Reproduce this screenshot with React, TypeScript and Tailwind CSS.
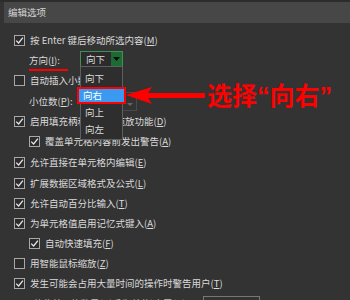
import type { ReactNode } from 'react'

const FONT = { fontFamily: '"Noto Sans CJK SC", "Liberation Sans", sans-serif' }

function Box({ checked }: { checked: boolean }) {
  return (
    <span className="flex h-[11px] w-[11px] shrink-0 items-center justify-center border border-[#a8a8a8] bg-[#2c2c2c]">
      {checked && (
        <svg width="9" height="9" viewBox="0 0 9 9">
          <path d="M1.2 4.6 L3.6 7 L7.9 1.6" fill="none" stroke="#e6e6e6" strokeWidth="1.3" />
        </svg>
      )}
    </span>
  )
}

function Row({
  checked,
  indent = false,
  h = 'h-[20px]',
  children,
}: {
  checked?: boolean
  indent?: boolean
  h?: string
  children: ReactNode
}) {
  return (
    <div className={`flex items-center gap-[5px] ${h} ${indent ? 'pl-[29px]' : 'pl-[14px]'}`}>
      {checked !== undefined && <Box checked={checked} />}
      <span className="whitespace-nowrap">{children}</span>
    </div>
  )
}

const U = ({ c }: { c: string }) => <span className="underline underline-offset-[1px]">{c}</span>

export default function App() {
  const items = ['向下', '向右', '向上', '向左']

  return (
    <div className="relative h-[300px] w-[350px] overflow-hidden bg-[#333333] text-[9.5px] text-[#dadada]" style={FONT}>
      <div className="h-[2px] bg-[#2c2c2c]" />
      {/* header */}
      <div className="ml-[4px] flex h-[21px] items-center bg-[#474747] pl-[4px] text-[#d4d4d4]">编辑选项</div>

      <div className="mt-[7px]">
        <Row checked>
          按 Enter 键后移动所选内容(<U c="M" />)
        </Row>
        <div className="flex h-[21px] items-center pl-[29px]">
          <span className="w-[51px]">
            方向(<U c="I" />):
          </span>
          <div className="flex h-[16px] w-[43px] -translate-y-[2px] border border-[#3f9152] bg-[#2b2b2b]">
            <span className="flex-1 pl-[5px] leading-[14px]">向下</span>
            <span className="flex w-[11px] items-center justify-center bg-[#1c6b33]">
              <svg width="7" height="4" viewBox="0 0 7 4">
                <path d="M0 0 H7 L3.5 4 Z" fill="#0b0b0b" />
              </svg>
            </span>
          </div>
        </div>
        <Row checked={false} h="h-[19px]">
          自动插入小数点(<U c="U" />)
        </Row>
        <div className="flex h-[22px] items-center pl-[29px]">
          <span className="w-[51px]">
            小位数(<U c="P" />):
          </span>
          <div className="flex h-[19px] w-[57px] border border-[#4a4a4a]">
            <span className="flex-1" />
            <span className="flex w-[13px] items-end justify-center pb-[4px]">
              <svg width="6" height="3" viewBox="0 0 6 3">
                <path d="M0 0 H6 L3 3 Z" fill="#666" />
              </svg>
            </span>
          </div>
        </div>
        <Row checked h="h-[19px]">
          启用填充柄和单元格拖放功能(<U c="D" />)
        </Row>
        <Row checked indent h="h-[21px]">
          覆盖单元格内容前发出警告(<U c="A" />)
        </Row>
        <Row checked h="h-[21px]">
          允许直接在单元格内编辑(<U c="E" />)
        </Row>
        <Row checked>
          扩展数据区域格式及公式(<U c="L" />)
        </Row>
        <Row checked>
          允许自动百分比输入(<U c="T" />)
        </Row>
        <Row checked>
          为单元格值启用记忆式键入(<U c="A" />)
        </Row>
        <Row checked indent>
          自动快速填充(<U c="F" />)
        </Row>
        <Row checked={false}>
          用智能鼠标缩放(<U c="Z" />)
        </Row>
        <Row checked>
          发生可能会占用大量时间的操作时警告用户(<U c="T" />)
        </Row>
        <div className="flex h-[20px] items-start pl-[33px] pt-[3px]">
          <span className="w-[170px] whitespace-nowrap text-[#bdbdbd]">若此单元格数目(以千为单位)大于(U):</span>
          <span className="h-[16px] w-[57px] border border-[#777]" />
        </div>
      </div>

      {/* red underline under 方向 */}
      <div className="absolute left-[29px] top-[69px] h-[2px] w-[39px] bg-[#ff0000]" />

      {/* open dropdown list */}
      <div className="absolute left-[80px] top-[66px] w-[43px] border border-[#5e5e5e] bg-[#2e2e2e] pt-[3px] pb-[1px]">
        {items.map(t => (
          <div key={t} className="h-[17px] pl-[4px] leading-[17px]">
            {t}
          </div>
        ))}
      </div>

      {/* highlighted option */}
      <div className="absolute left-[77px] top-[87px] flex h-[17px] w-[49px] items-center border-[2.5px] border-[#ff0000] bg-[#3a9af2] pl-[4px] text-white">
        向右
      </div>

      {/* arrow */}
      <svg className="absolute left-[120px] top-[82px]" width="88" height="26" viewBox="0 0 88 26">
        <path d="M6 13 L32 5 L28 11 L85 11 L85 16 L28 16 L32 22 Z" fill="#ff0000" />
      </svg>

      {/* annotation */}
      <div
        className="absolute left-[207px] top-[84px] whitespace-nowrap text-[25px] font-bold leading-none text-[#ff0000]"
        style={{ fontFamily: '"Liberation Sans", "Noto Sans CJK SC", sans-serif' }}
      >
        选择“向右”
      </div>
    </div>
  )
}
